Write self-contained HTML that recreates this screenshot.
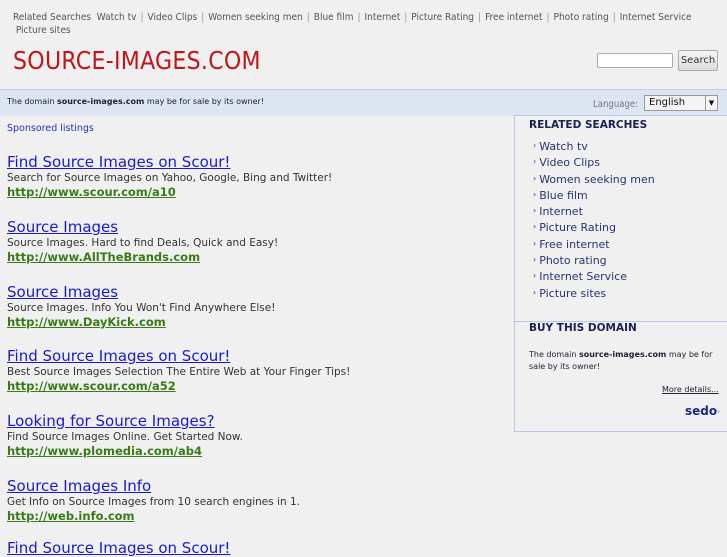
<!DOCTYPE html>
<html><head><meta charset="utf-8"><style>
*{margin:0;padding:0;box-sizing:border-box}
body{width:727px;height:545px;overflow:hidden;background:#f0f0f0;font-family:"DejaVu Sans",Verdana,sans-serif;position:relative}
.abs{position:absolute}
#top{left:13px;top:11px;font-family:"DejaVu Sans Condensed","DejaVu Sans",sans-serif;font-size:10px;color:#555;line-height:13px;width:710px;white-space:nowrap}
#top .s{color:#999;margin:0 4px}
#logo{left:13px;top:46px;font-size:24.5px;color:#c0161b;font-family:"DejaVu Sans Condensed","DejaVu Sans",sans-serif;letter-spacing:0.3px}
#inp{left:597px;top:53px;width:76px;height:15px;background:#fff;border:1px solid #aaa;border-radius:2px}
#btn{left:678px;top:50px;width:40px;height:21px;border:1px solid #aaa;border-radius:2px;background:linear-gradient(#f6f6f6,#dcdcdc);font-size:10px;color:#333;text-align:center;line-height:19px}
#bar{left:0;top:89px;width:727px;height:27px;background:#dde5f2;border-top:1px solid #c0cfe6}
#bar .t{left:7px;top:7px;font-size:8px;color:#223}
#lang{left:593px;top:9px;font-size:9.5px;color:#777;font-family:"DejaVu Sans Condensed","DejaVu Sans",sans-serif}
#sel{left:644px;top:5px;width:74px;height:16px;border:1px solid #999;background:#f4f4f4;font-size:10px;color:#111;line-height:14px;padding-left:4px}
#sel i{position:absolute;right:0;top:0;width:12px;height:14px;border-left:1px solid #999;font-style:normal;font-size:7px;text-align:center;line-height:14px}
#spon{left:7px;top:123px;font-size:9.5px;color:#2233cc}
.ad{position:absolute;left:7px}
.ad a{display:block;font-size:15px;color:#1a1acc;text-decoration:underline;line-height:17px}
.ad p{font-size:10.5px;color:#333;line-height:14px}
.ad b{display:block;font-size:11.5px;color:#3a7a1a;text-decoration:underline;line-height:14px}
#side{left:514px;top:115px;width:213px;height:317px;border:1px solid #b8c8e2;border-right:none}
#side h3{position:absolute;left:14px;font-size:10.5px;color:#1a2255;font-weight:bold}
#side ul{position:absolute;left:18px;top:23px;list-style:none}
#side li{font-size:11px;color:#2a3370;line-height:16.3px;height:16.3px}
#side li:before{content:"\203A";font-size:8px;margin-right:3px;display:inline-block;line-height:0;vertical-align:2px}
#div{position:absolute;left:0;top:205px;width:213px;border-top:1px solid #b8c8e2}
#bt{position:absolute;left:14px;top:233px;font-size:8px;color:#223;line-height:12px;width:195px}
#more{position:absolute;left:147px;top:269px;font-size:8px;color:#223;text-decoration:underline}
#sedo{position:absolute;left:170px;top:288px;font-size:12px;font-weight:bold;color:#1a2a88}
</style></head><body>
<div id="top" class="abs">Related Searches&nbsp; Watch tv<span class="s">|</span>Video Clips<span class="s">|</span>Women seeking men<span class="s">|</span>Blue film<span class="s">|</span>Internet<span class="s">|</span>Picture Rating<span class="s">|</span>Free internet<span class="s">|</span>Photo rating<span class="s">|</span>Internet Service<br>&nbsp;Picture sites</div>
<div id="logo" class="abs">SOURCE-IMAGES.COM</div>
<div id="inp" class="abs"></div>
<div id="btn" class="abs">Search</div>
<div id="bar" class="abs"><div class="t abs">The domain <b>source-images.com</b> may be for sale by its owner!</div><div id="lang" class="abs">Language:</div><div id="sel" class="abs">English<i>▼</i></div></div>
<div id="spon" class="abs">Sponsored listings</div>
<div class="ad" style="top:154px"><a>Find Source Images on Scour!</a><p>Search for Source Images on Yahoo, Google, Bing and Twitter!</p><b>http://www.scour.com/a10</b></div>
<div class="ad" style="top:219px"><a>Source Images</a><p>Source Images. Hard to find Deals, Quick and Easy!</p><b>http://www.AllTheBrands.com</b></div>
<div class="ad" style="top:284px"><a>Source Images</a><p>Source Images. Info You Won't Find Anywhere Else!</p><b>http://www.DayKick.com</b></div>
<div class="ad" style="top:348px"><a>Find Source Images on Scour!</a><p>Best Source Images Selection The Entire Web at Your Finger Tips!</p><b>http://www.scour.com/a52</b></div>
<div class="ad" style="top:413px"><a>Looking for Source Images?</a><p>Find Source Images Online. Get Started Now.</p><b>http://www.plomedia.com/ab4</b></div>
<div class="ad" style="top:478px"><a>Source Images Info</a><p>Get Info on Source Images from 10 search engines in 1.</p><b>http://web.info.com</b></div>
<div class="ad" style="top:540px"><a>Find Source Images on Scour!</a></div>
<div id="side" class="abs">
<h3 style="top:3px">RELATED SEARCHES</h3>
<ul><li>Watch tv</li><li>Video Clips</li><li>Women seeking men</li><li>Blue film</li><li>Internet</li><li>Picture Rating</li><li>Free internet</li><li>Photo rating</li><li>Internet Service</li><li>Picture sites</li></ul>
<div id="div"></div>
<h3 style="top:206px">BUY THIS DOMAIN</h3>
<div id="bt">The domain <b>source-images.com</b> may be for sale by its owner!</div>
<div id="more">More details...</div>
<div id="sedo">sedo<span style="font-size:6px;color:#888">°</span></div>
</div>
</body></html>
